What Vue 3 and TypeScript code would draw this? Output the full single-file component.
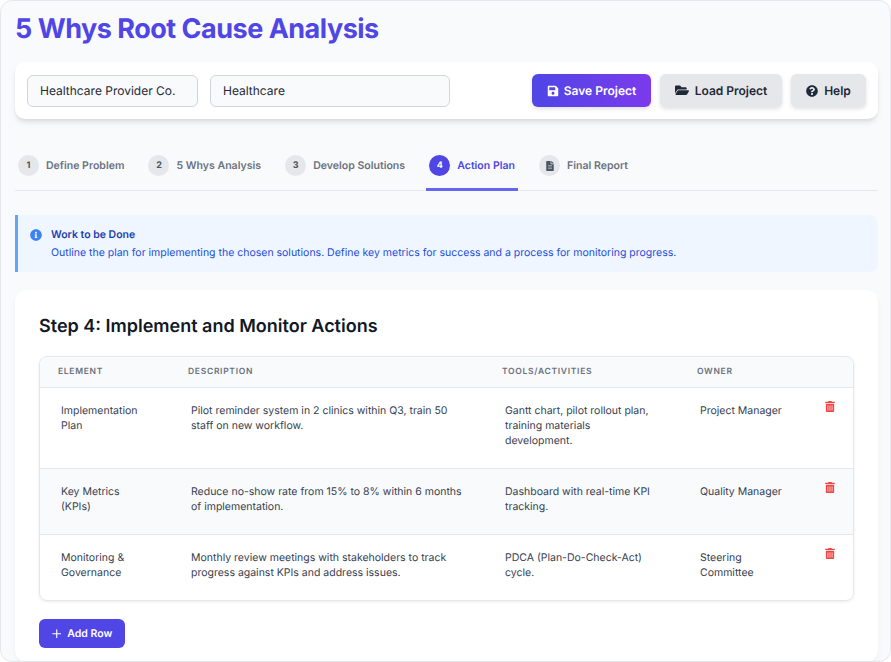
<script setup lang="ts">
interface Row { element: string; description: string; tools: string; owner: string }
interface Tab { label: string; num: string; active?: boolean; icon?: boolean }

const tabs: Tab[] = [
  { label: 'Define Problem', num: '1' },
  { label: '5 Whys Analysis', num: '2' },
  { label: 'Develop Solutions', num: '3' },
  { label: 'Action Plan', num: '4', active: true },
  { label: 'Final Report', num: '', icon: true },
]

const rows: Row[] = [
  {
    element: 'Implementation Plan',
    description: 'Pilot reminder system in 2 clinics within Q3, train 50 staff on new workflow.',
    tools: 'Gantt chart, pilot rollout plan, training materials development.',
    owner: 'Project Manager',
  },
  {
    element: 'Key Metrics (KPIs)',
    description: 'Reduce no-show rate from 15% to 8% within 6 months of implementation.',
    tools: 'Dashboard with real-time KPI tracking.',
    owner: 'Quality Manager',
  },
  {
    element: 'Monitoring & Governance',
    description: 'Monthly review meetings with stakeholders to track progress against KPIs and address issues.',
    tools: 'PDCA (Plan-Do-Check-Act) cycle.',
    owner: 'Steering Committee',
  },
]
</script>

<template>
  <div class="frame">
    <h1 class="title">5 Whys Root Cause Analysis</h1>

    <div class="toolbar">
      <input class="field company" value="Healthcare Provider Co." />
      <input class="field industry" value="Healthcare" />
      <div class="actions">
        <button class="btn primary">
          <svg class="ico" viewBox="0 0 448 512"><path fill="currentColor" d="M433.941 129.941l-83.882-83.882A48 48 0 0 0 316.118 32H48C21.49 32 0 53.49 0 80v352c0 26.51 21.49 48 48 48h352c26.51 0 48-21.49 48-48V163.882a48 48 0 0 0-14.059-33.941zM224 416c-35.346 0-64-28.654-64-64 0-35.346 28.654-64 64-64s64 28.654 64 64c0 35.346-28.654 64-64 64zm96-304.52V212c0 6.627-5.373 12-12 12H76c-6.627 0-12-5.373-12-12V108c0-6.627 5.373-12 12-12h228.52c3.183 0 6.235 1.264 8.485 3.515l3.48 3.48A11.996 11.996 0 0 1 320 111.48z"/></svg>
          Save Project
        </button>
        <button class="btn secondary">
          <svg class="ico wide" viewBox="0 0 576 512"><path fill="currentColor" d="M572.694 292.093L500.27 416.248A63.997 63.997 0 0 1 444.989 448H45.025c-18.523 0-30.064-20.093-20.731-36.093l72.424-124.155A64 64 0 0 1 152 256h399.964c18.523 0 30.064 20.093 20.73 36.093zM152 224h328v-48c0-26.51-21.49-48-48-48H272l-64-64H48C21.49 64 0 85.49 0 112v278.046l69.077-118.418C86.214 242.25 117.989 224 152 224z"/></svg>
          Load Project
        </button>
        <button class="btn secondary">
          <svg class="ico" viewBox="0 0 512 512"><path fill="currentColor" d="M504 256c0 136.997-111.043 248-248 248S8 392.997 8 256C8 119.083 119.043 8 256 8s248 111.083 248 248zM262.655 90c-54.497 0-89.255 22.957-116.549 63.758-3.536 5.286-2.353 12.415 2.715 16.258l34.699 26.31c5.205 3.947 12.621 3.008 16.665-2.122 17.864-22.658 30.113-35.797 57.303-35.797 20.429 0 45.698 13.148 45.698 32.958 0 14.976-12.363 22.667-32.534 33.976C247.128 238.528 216 254.941 216 296v4c0 6.627 5.373 12 12 12h56c6.627 0 12-5.373 12-12v-1.333c0-28.462 83.186-29.647 83.186-106.667 0-58.002-60.165-102-116.531-102zM256 338c-25.365 0-46 20.635-46 46 0 25.364 20.635 46 46 46s46-20.636 46-46c0-25.365-20.635-46-46-46z"/></svg>
          Help
        </button>
      </div>
    </div>

    <nav class="tabs">
      <div v-for="tab in tabs" :key="tab.label" class="tab" :class="{ active: tab.active }">
        <span class="badge">
          <svg v-if="tab.icon" class="file" viewBox="0 0 384 512"><path fill="currentColor" d="M224 136V0H24C10.7 0 0 10.7 0 24v464c0 13.3 10.7 24 24 24h336c13.3 0 24-10.7 24-24V160H248c-13.2 0-24-10.8-24-24zm64 236c0 6.6-5.4 12-12 12H108c-6.6 0-12-5.4-12-12v-8c0-6.6 5.4-12 12-12h168c6.6 0 12 5.4 12 12v8zm0-64c0 6.6-5.4 12-12 12H108c-6.6 0-12-5.4-12-12v-8c0-6.6 5.4-12 12-12h168c6.6 0 12 5.4 12 12v8zm0-72v8c0 6.6-5.4 12-12 12H108c-6.6 0-12-5.4-12-12v-8c0-6.6 5.4-12 12-12h168c6.6 0 12 5.4 12 12zm96-114.1v6.1H256V0h6.1c6.4 0 12.5 2.5 17 7l97.9 98c4.5 4.5 7 10.6 7 16.9z"/></svg>
          <template v-else>{{ tab.num }}</template>
        </span>
        <span>{{ tab.label }}</span>
      </div>
    </nav>

    <section class="notice">
      <svg class="notice-ico" viewBox="0 0 512 512"><path fill="currentColor" d="M256 8C119.043 8 8 119.083 8 256c0 136.997 111.043 248 248 248s248-111.003 248-248C504 119.083 392.957 8 256 8zm0 110c23.196 0 42 18.804 42 42s-18.804 42-42 42-42-18.804-42-42 18.804-42 42-42zm56 254c0 6.627-5.373 12-12 12h-88c-6.627 0-12-5.373-12-12v-24c0-6.627 5.373-12 12-12h12v-64h-12c-6.627 0-12-5.373-12-12v-24c0-6.627 5.373-12 12-12h64c6.627 0 12 5.373 12 12v100h12c6.627 0 12 5.373 12 12v24z"/></svg>
      <div>
        <p class="notice-title">Work to be Done</p>
        <p class="notice-body">Outline the plan for implementing the chosen solutions. Define key metrics for success and a process for monitoring progress.</p>
      </div>
    </section>

    <main class="card">
      <h2 class="step">Step 4: Implement and Monitor Actions</h2>
      <div class="table">
        <div class="grid head">
          <span>Element</span>
          <span>Description</span>
          <span>Tools/Activities</span>
          <span>Owner</span>
          <span></span>
        </div>
        <div v-for="row in rows" :key="row.element" class="grid row">
          <div class="cell">{{ row.element }}</div>
          <div class="cell">{{ row.description }}</div>
          <div class="cell">{{ row.tools }}</div>
          <div class="cell">{{ row.owner }}</div>
          <div class="del">
            <svg class="trash" viewBox="0 0 448 512"><path fill="currentColor" d="M32 464a48 48 0 0 0 48 48h288a48 48 0 0 0 48-48V128H32zm272-256a16 16 0 0 1 32 0v224a16 16 0 0 1-32 0zm-96 0a16 16 0 0 1 32 0v224a16 16 0 0 1-32 0zm-96 0a16 16 0 0 1 32 0v224a16 16 0 0 1-32 0zM432 32H312l-9.4-18.7A24 24 0 0 0 281.1 0H166.8a23.72 23.72 0 0 0-21.4 13.3L136 32H16A16 16 0 0 0 0 48v32a16 16 0 0 0 16 16h416a16 16 0 0 0 16-16V48a16 16 0 0 0-16-16z"/></svg>
          </div>
        </div>
      </div>
      <button class="add">
        <svg class="plus" viewBox="0 0 10 10"><path d="M5 .8v8.4M.8 5h8.4" stroke="currentColor" stroke-width="1.2" stroke-linecap="round" fill="none"/></svg>
        Add Row
      </button>
    </main>
  </div>
</template>

<style>
html, body { margin: 0; background: #fff; }
</style>

<style scoped>
.frame {
  box-sizing: border-box;
  width: 891px;
  height: 662px;
  overflow: hidden;
  border: 1px solid #e5e7eb;
  border-radius: 12px;
  background: #f9fafb;
  padding: 11px 12px 0 14px;
  font-family: Inter, "Liberation Sans", sans-serif;
  color: #1f2937;
  text-rendering: geometricPrecision;
}
.title {
  margin: 0 0 17px;
  font-size: 27px;
  line-height: 33px;
  font-weight: 700;
  letter-spacing: -0.5px;
  color: #4f46e5;
}
.toolbar {
  display: flex;
  align-items: center;
  height: 57px;
  box-sizing: border-box;
  padding: 0 12px;
  gap: 12px;
  background: #fff;
  border-radius: 10px;
  box-shadow: 0 4px 6px -1px rgba(0,0,0,.1), 0 2px 4px -2px rgba(0,0,0,.1);
}
.field {
  box-sizing: border-box;
  height: 32px;
  padding: 0 12px;
  border: 1px solid #d1d5db;
  border-radius: 6px;
  background: #f9fafb;
  font: 400 12px Inter, sans-serif;
  color: #1f2937;
  outline: none;
  text-rendering: geometricPrecision;
}
.company { width: 171px; }
.industry { width: 240px; }
.actions { display: flex; gap: 9px; margin-left: auto; }
.btn {
  display: flex;
  align-items: center;
  justify-content: center;
  gap: 6px;
  height: 33px;
  border: 0;
  border-radius: 6px;
  font: 600 12px Inter, sans-serif;
  text-rendering: geometricPrecision;
  box-shadow: 0 2px 4px rgba(0,0,0,.12);
}
.btn:nth-child(1) { width: 119px; }
.btn:nth-child(2) { width: 122px; }
.btn:nth-child(3) { width: 75px; }
.primary { gap: 5px; color: #fff; background: linear-gradient(90deg, #4f46e5, #7c3aed); }
.secondary { color: #1f2937; background: #e5e7eb; }
.ico { width: 12px; height: 12px; }
.ico.wide { width: 14px; height: 12.5px; }
.tabs {
  display: flex;
  gap: 18.1px;
  margin-top: 28px;
  height: 44px;
  box-sizing: border-box;
  border-bottom: 1px solid #e5e7eb;
}
.tab {
  display: flex;
  align-items: flex-start;
  gap: 7px;
  height: 44px;
  box-sizing: border-box;
  padding: 8px 3px 0;
  font-size: 10.55px;
  font-weight: 600;
  line-height: 21px;
  color: #6b7280;
}
.tab.active {
  color: #4f46e5;
  border-bottom: 3px solid #6366f1;
}
.badge {
  display: flex;
  align-items: center;
  justify-content: center;
  width: 21px;
  height: 21px;
  border-radius: 50%;
  background: #e5e7eb;
  color: #4b5563;
  font-size: 9px;
  font-weight: 700;
}
.active .badge { background: #4f46e5; color: #fff; }
.file { width: 8px; height: 10px; }
.notice {
  display: flex;
  gap: 9px;
  margin-top: 24px;
  height: 57px;
  box-sizing: border-box;
  padding: 11px 12px;
  background: #eff6ff;
  border-left: 3px solid #60a5fa;
  border-radius: 0 8px 8px 0;
}
.notice-ico { width: 12px; height: 12px; color: #3b82f6; margin-top: 3px; flex: none; }
.notice p { margin: 0; font-size: 10.5px; line-height: 18px; }
.notice-title { font-weight: 600; color: #1e40af; }
.notice-body { color: #1d4ed8; }
.card {
  margin-top: 18px;
  height: 372px;
  box-sizing: border-box;
  padding: 25px 24px 24px;
  background: #fff;
  border-radius: 12px;
  box-shadow: 0 4px 6px -1px rgba(0,0,0,.06);
}
.step {
  margin: 0 0 18px;
  font-size: 18px;
  line-height: 23px;
  font-weight: 600;
  color: #111827;
}
.table {
  border: 1px solid #e5e7eb;
  border-radius: 8px;
  overflow: hidden;
  box-shadow: 0 1px 3px rgba(0,0,0,.08);
}
.grid {
  display: grid;
  grid-template-columns: 130px 314px 195px 1fr 50px;
}
.head {
  height: 30px;
  align-items: center;
  background: #f9fafb;
  font-size: 8.5px;
  font-weight: 600;
  letter-spacing: .7px;
  text-transform: uppercase;
  color: #6b7280;
}
.head span { padding-left: 18px; }
.row {
  border-top: 1px solid #e5e7eb;
  padding: 15px 0 20px;
  font-size: 10.5px;
  line-height: 15px;
  color: #374151;
}
.row:nth-child(odd) { background: #f9fafb; }
.cell { padding: 0 21px; }
.del { padding-left: 22px; color: #ef4444; line-height: 0; }
.trash { width: 10px; height: 11px; margin-top: -2px; }
.add {
  display: flex;
  align-items: center;
  gap: 6px;
  margin-top: 18px;
  width: 86px;
  height: 29px;
  justify-content: center;
  border: 0;
  border-radius: 6px;
  background: #4f46e5;
  color: #fff;
  font: 600 10.5px Inter, sans-serif;
  text-rendering: geometricPrecision;
}
.plus { width: 9.5px; height: 9.5px; }
</style>
